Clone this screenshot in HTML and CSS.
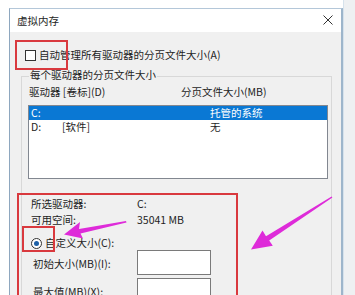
FILE: index.html
```html
<!DOCTYPE html>
<html lang="zh-CN">
<head>
<meta charset="utf-8">
<title>虚拟内存</title>
<link rel="stylesheet" href="styles.css">
</head>
<body>
<div class="page">
  <div class="window">
    <div class="titlebar">
      <span class="title">虚拟内存</span>
      <svg class="close" width="10" height="10" viewBox="0 0 10 10"><path d="M0.5 0.5 L9.5 9.5 M9.5 0.5 L0.5 9.5" stroke="#333" stroke-width="1" fill="none"/></svg>
    </div>
    <div class="content">
      <div class="check-row"><span class="checkbox"></span><span>自动管理所有驱动器的分页文件大小(A)</span></div>
      <div class="group">
        <div class="legend">每个驱动器的分页文件大小</div>
        <div class="list-head"><span class="col-drive">驱动器 [卷标](D)</span><span>分页文件大小(MB)</span></div>
        <div class="list">
          <div class="row selected"><span class="c1">C:</span><span class="c2"></span><span class="c3">托管的系统</span></div>
          <div class="row"><span class="c1">D:</span><span class="c2">[软件]</span><span class="c3">无</span></div>
        </div>
        <div class="info">
          <div class="info-row"><span class="info-label">所选驱动器:</span><span>C:</span></div>
          <div class="info-row"><span class="info-label">可用空间:</span><span>35041 MB</span></div>
        </div>
        <div class="radio-row"><span class="radio"></span><span>自定义大小(C):</span></div>
        <div class="field-row"><span class="field-label">初始大小(MB)(I):</span><span class="input"></span></div>
        <div class="field-row second"><span class="field-label">最大值(MB)(X):</span><span class="input"></span></div>
      </div>
    </div>
  </div>
  <div class="side"></div>
</div>
<div class="mark mark-check"></div>
<div class="mark mark-radio"></div>
<div class="mark mark-size"></div>
<svg class="arrows" width="355" height="295" viewBox="0 0 355 295">
  <path d="M64 234.5 L80 222 L79 229 L126 221 L126.5 222.6 L80.5 233.5 L83 238.5 Z" fill="#de2bd9"/>
  <path d="M251 249.5 L262.5 230.5 L266 236.3 L331.6 196.4 L332.4 197.6 L269.2 240.5 L272.8 245.8 Z" fill="#de2bd9"/>
</svg>
</body>
</html>
```

FILE: styles.css
```css
* { box-sizing: border-box; }

html, body {
  margin: 0;
  padding: 0;
}

body {
  width: 355px;
  height: 295px;
  overflow: hidden;
  position: relative;
  background: #ffffff;
  font-family: "Noto Sans CJK SC", "Noto Sans", sans-serif;
  font-size: 10.5px;
  color: #1e1e1e;
}

.page {
  display: flex;
  height: 295px;
}

.window {
  margin-left: 9px;
  margin-top: 8px;
  width: 334px;
  border-left: 1px solid #8ea7bf;
  border-right: 2px solid #9db5cb;
  border-top: 1px solid #b4c7d9;
  display: flex;
  flex-direction: column;
  background: #f0f0f0;
}

.titlebar {
  height: 23px;
  background: #ffffff;
  display: flex;
  align-items: center;
  justify-content: space-between;
  padding: 0 8px 0 7px;
}

.title {
  line-height: 23px;
}

.close {
  display: block;
  margin-top: -2px;
}

.content {
  flex: 1;
  display: flex;
  flex-direction: column;
  background: #f0f0f0;
}

.check-row {
  margin-top: 15px;
  height: 16px;
  line-height: 16px;
  display: flex;
  align-items: center;
  padding-left: 15px;
  gap: 3px;
}

.checkbox {
  width: 11px;
  height: 11px;
  border: 1px solid #333;
  background: #fff;
}

.group {
  margin-top: 13px;
  margin-left: 11px;
  width: 311px;
  flex: 1;
  border: 1px solid #d8d8d8;
  border-bottom: none;
  display: flex;
  flex-direction: column;
}

.legend {
  align-self: flex-start;
  margin-top: -10px;
  margin-left: 7px;
  padding: 0 1px;
  line-height: 16px;
  height: 16px;
  background: #f0f0f0;
}

.list-head {
  display: flex;
  margin-top: 1px;
  height: 16px;
  line-height: 16px;
  padding-left: 7px;
}

.col-drive {
  width: 152px;
}

.list {
  margin-top: 5px;
  margin-left: 6px;
  width: 300px;
  height: 74px;
  border: 1px solid #828790;
  background: #fff;
}

.row {
  display: flex;
  height: 14px;
  line-height: 14px;
}

.row.selected {
  background: #0a78d4;
  color: #fff;
}

.c1 {
  width: 33px;
  padding-left: 2px;
}

.c2 {
  width: 148px;
}

.info {
  margin-top: 17px;
}

.info-row {
  display: flex;
  height: 16px;
  line-height: 16px;
}

.info-label {
  margin-left: 9px;
  width: 106px;
}

.radio-row {
  margin-top: 8px;
  height: 14px;
  line-height: 14px;
  display: flex;
  align-items: center;
  gap: 3px;
  padding-left: 9px;
}

.radio {
  width: 11px;
  height: 11px;
  border: 1px solid #333;
  border-radius: 50%;
  background: #fff;
  display: flex;
  align-items: center;
  justify-content: center;
}

.radio::after {
  content: "";
  width: 5px;
  height: 5px;
  border-radius: 50%;
  background: #1d5fa6;
}

.field-row {
  display: flex;
  align-items: center;
  height: 25px;
}

.field-row.second {
  margin-top: 3px;
}

.field-label {
  margin-left: 11px;
  width: 104px;
  line-height: 16px;
  padding-top: 2px;
}

.input {
  width: 74px;
  height: 25px;
  border: 1px solid #7a7a7a;
  background: #fff;
}

.side {
  flex: 1;
  background: #eef0f2;
  border-left: 1px solid #d6e2ec;
}

.mark {
  position: absolute;
  border: 2px solid #d9393e;
}

.mark-check {
  left: 15px;
  top: 40px;
  width: 53px;
  height: 30px;
}

.mark-radio {
  left: 22px;
  top: 226px;
  width: 33px;
  height: 26px;
}

.mark-size {
  left: 17px;
  top: 193px;
  width: 221px;
  height: 120px;
}

.arrows {
  position: absolute;
  left: 0;
  top: 0;
  pointer-events: none;
}
```
